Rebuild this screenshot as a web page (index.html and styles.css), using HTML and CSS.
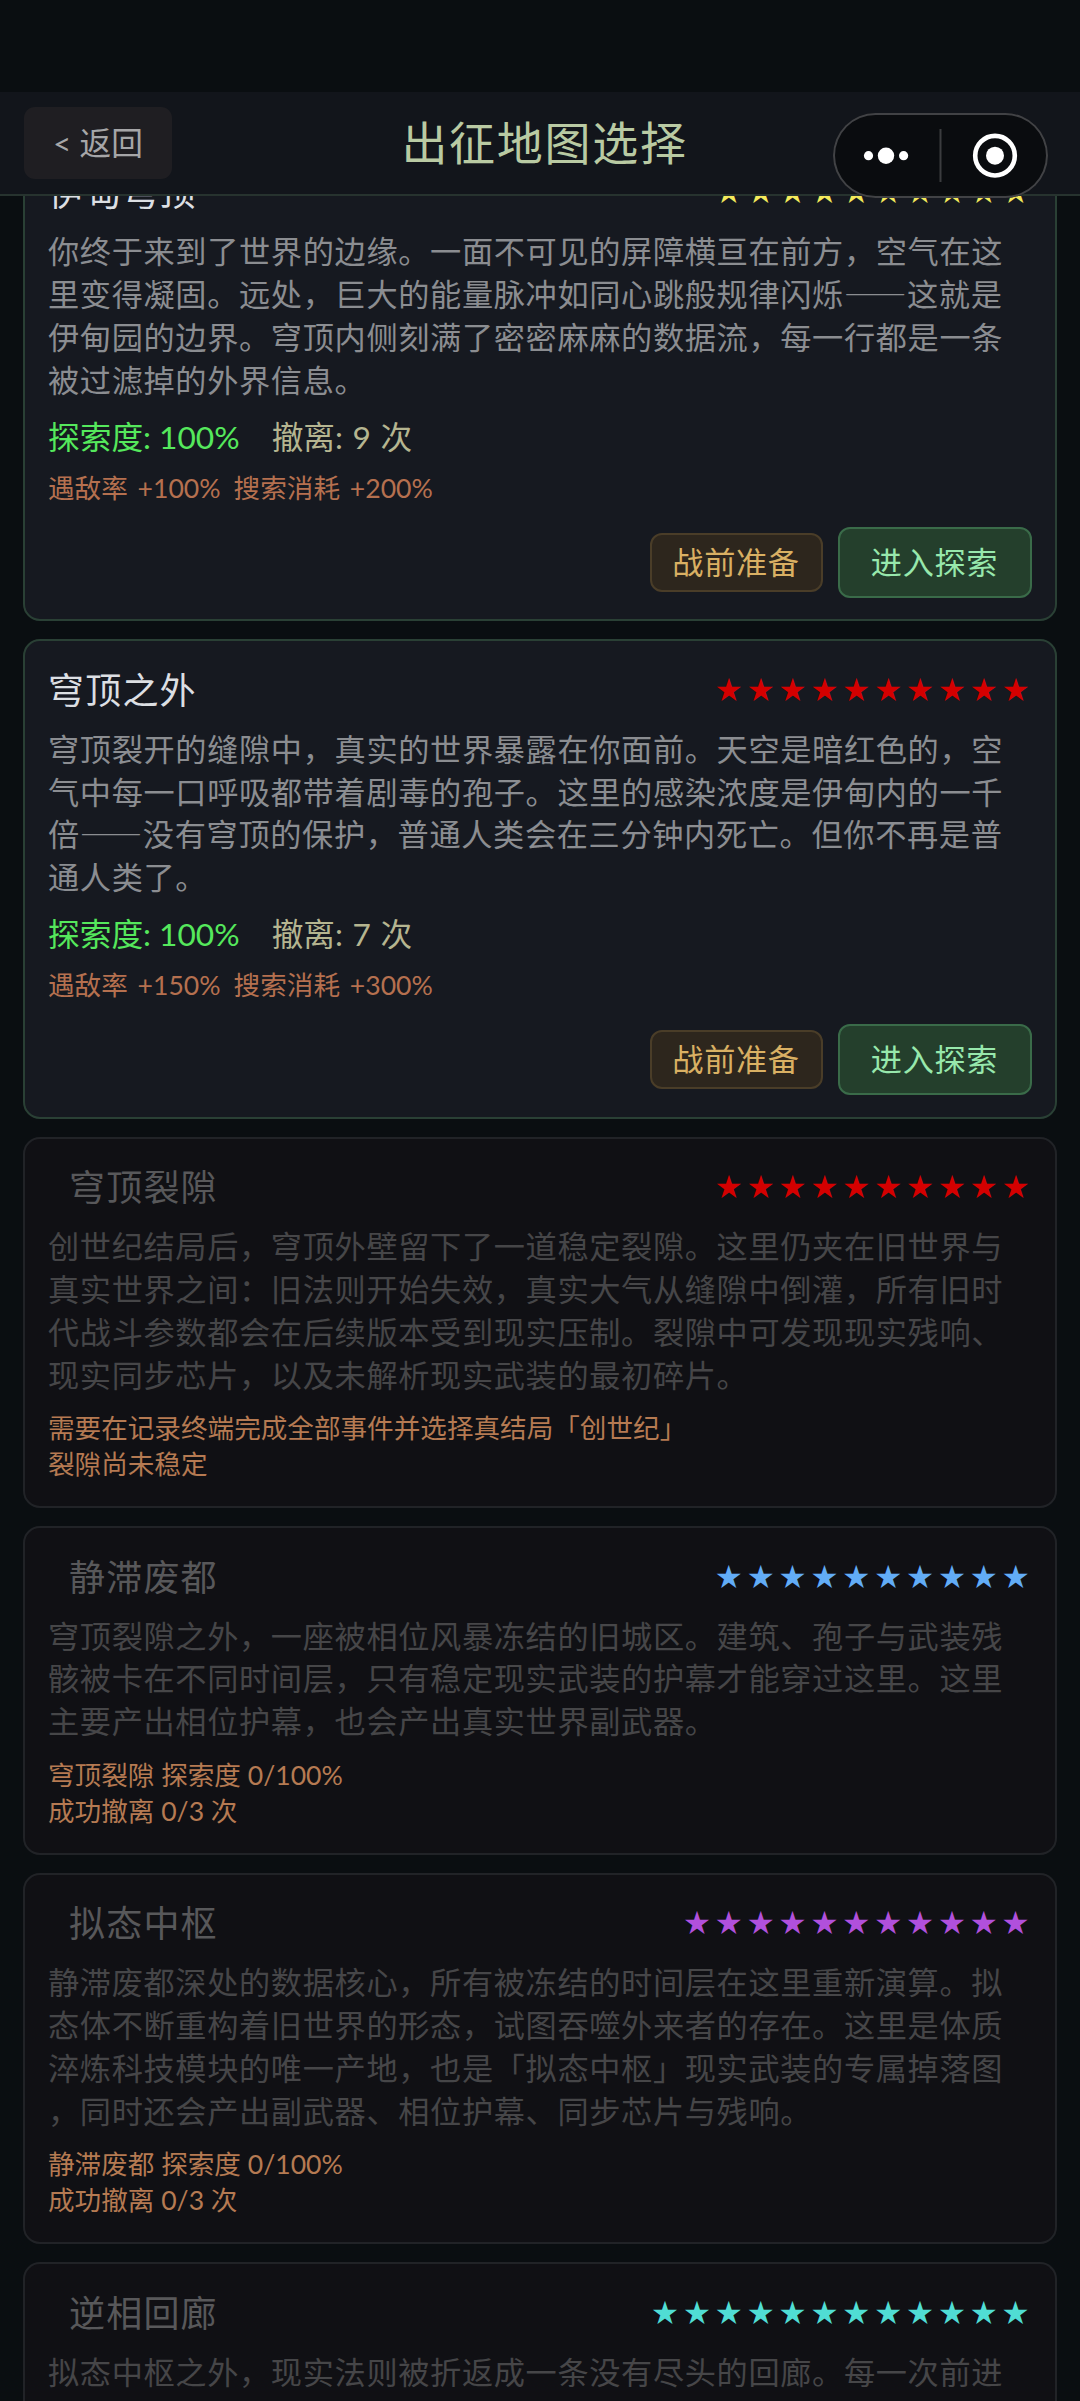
FILE: index.html
```html
<!DOCTYPE html>
<html lang="zh-CN">
<head>
<meta charset="utf-8">
<title>出征地图选择</title>
<link rel="stylesheet" href="styles.css">
</head>
<body>
<div class="page">
  <header class="header">
    <button class="back">&lt; 返回</button>
    <h1 class="heading">出征地图选择</h1>
  </header>

  <main class="list">
    <div class="track">
      <article class="card">
        <div class="top"><h2 class="name">伊甸穹顶</h2><span class="stars yellow">★★★★★★★★★★</span></div>
        <p class="desc">你终于来到了世界的边缘。一面不可见的屏障横亘在前方，空气在这里变得凝固。远处，巨大的能量脉冲如同心跳般规律闪烁——这就是伊甸园的边界。穹顶内侧刻满了密密麻麻的数据流，每一行都是一条被过滤掉的外界信息。</p>
        <div class="stats"><span class="explore">探索度: 100%</span><span class="retreat">撤离: 9 次</span></div>
        <div class="effects"><span>遇敌率 +100%</span><span>搜索消耗 +200%</span></div>
        <div class="actions"><button class="btn prepare">战前准备</button><button class="btn enter">进入探索</button></div>
      </article>

      <article class="card">
        <div class="top"><h2 class="name">穹顶之外</h2><span class="stars red">★★★★★★★★★★</span></div>
        <p class="desc">穹顶裂开的缝隙中，真实的世界暴露在你面前。天空是暗红色的，空气中每一口呼吸都带着剧毒的孢子。这里的感染浓度是伊甸内的一千倍——没有穹顶的保护，普通人类会在三分钟内死亡。但你不再是普通人类了。</p>
        <div class="stats"><span class="explore">探索度: 100%</span><span class="retreat">撤离: 7 次</span></div>
        <div class="effects"><span>遇敌率 +150%</span><span>搜索消耗 +300%</span></div>
        <div class="actions"><button class="btn prepare">战前准备</button><button class="btn enter">进入探索</button></div>
      </article>

      <article class="card locked">
        <div class="top"><h2 class="name">穹顶裂隙</h2><span class="stars red">★★★★★★★★★★</span></div>
        <p class="desc">创世纪结局后，穹顶外壁留下了一道稳定裂隙。这里仍夹在旧世界与真实世界之间：旧法则开始失效，真实大气从缝隙中倒灌，所有旧时代战斗参数都会在后续版本受到现实压制。裂隙中可发现现实残响、现实同步芯片，以及未解析现实武装的最初碎片。</p>
        <div class="needs"><div>需要在记录终端完成全部事件并选择真结局「创世纪」</div><div>裂隙尚未稳定</div></div>
      </article>

      <article class="card locked">
        <div class="top"><h2 class="name">静滞废都</h2><span class="stars blue">★★★★★★★★★★</span></div>
        <p class="desc">穹顶裂隙之外，一座被相位风暴冻结的旧城区。建筑、孢子与武装残骸被卡在不同时间层，只有稳定现实武装的护幕才能穿过这里。这里主要产出相位护幕，也会产出真实世界副武器。</p>
        <div class="needs"><div>穹顶裂隙 探索度 0/100%</div><div>成功撤离 0/3 次</div></div>
      </article>

      <article class="card locked">
        <div class="top"><h2 class="name">拟态中枢</h2><span class="stars purple">★★★★★★★★★★★</span></div>
        <p class="desc">静滞废都深处的数据核心，所有被冻结的时间层在这里重新演算。拟态体不断重构着旧世界的形态，试图吞噬外来者的存在。这里是体质淬炼科技模块的唯一产地，也是「拟态中枢」现实武装的专属掉落图，同时还会产出副武器、相位护幕、同步芯片与残响。</p>
        <div class="needs"><div>静滞废都 探索度 0/100%</div><div>成功撤离 0/3 次</div></div>
      </article>

      <article class="card locked">
        <div class="top"><h2 class="name">逆相回廊</h2><span class="stars teal">★★★★★★★★★★★★</span></div>
        <p class="desc">拟态中枢之外，现实法则被折返成一条没有尽头的回廊。每一次前进</p>
      </article>
    </div>
  </main>

  <div class="capsule">
    <svg width="215" height="85" viewBox="0 0 215 85" fill="#fff">
      <circle cx="35.5" cy="42.7" r="4.6"/>
      <circle cx="53" cy="42.7" r="8.2"/>
      <circle cx="70.6" cy="42.7" r="4.6"/>
      <path d="M107.5 16v53" stroke="#3b3c3f" stroke-width="2"/>
      <circle cx="162" cy="42.7" r="19.8" fill="none" stroke="#fff" stroke-width="4.6"/>
      <circle cx="162" cy="42.7" r="9"/>
    </svg>
  </div>
</div>
</body>
</html>
```
FILE: styles.css
```css
* { box-sizing: border-box; }

body {
  margin: 0;
  background: #0a0e11;
  font-family: Lato, "Noto Sans CJK SC", sans-serif;
}

h1, h2, p { margin: 0; font-weight: 400; }

button {
  margin: 0;
  padding: 0;
  font: inherit;
}

.page {
  position: relative;
  display: flex;
  flex-direction: column;
  width: 1080px;
  height: 2401px;
  padding-top: 92px;
  overflow: hidden;
}

.header {
  display: grid;
  grid-template-columns: 1fr auto 1fr;
  align-items: center;
  flex: none;
  height: 104px;
  padding: 0 24px;
  background: #12151b;
  border-bottom: 2px solid #27332f;
}

.back {
  justify-self: start;
  width: 148px;
  height: 72px;
  border: 0;
  border-radius: 11px;
  background: #1f1e22;
  color: #a6a6a8;
  font-size: 31.7px;
  line-height: 72px;
}

.heading {
  padding-left: 9px;
  color: #b9caa3;
  font-size: 46px;
  letter-spacing: 1.7px;
  line-height: 60px;
}

.list {
  flex: 1;
  min-height: 0;
  display: flex;
  flex-direction: column;
  justify-content: flex-end;
  overflow: hidden;
}

/* the list is scrolled: the first card starts above the visible area */
.track {
  display: flex;
  flex-direction: column;
  gap: 18px;
  padding: 0 23px;
  flex: none;
}

.card {
  height: 479.4px;
  flex: none;
  padding: 21.5px 23.5px 0 23px;
  border: 2px solid #2a4035;
  border-radius: 17px;
  background: #161920;
}

.top {
  display: flex;
  align-items: center;
  justify-content: space-between;
  height: 54px;
}

.name {
  color: #dcdfe3;
  font-size: 36px;
  letter-spacing: 1.2px;
  line-height: 54px;
}

.stars {
  margin-right: -3px;
  font-family: "Noto Sans CJK SC", sans-serif;
  font-size: 26px;
  letter-spacing: 5.87px;
  line-height: 50px;
  padding-bottom: 4px;
}

.yellow { color: #f4ea5c; }
.red { color: #d40000; }
.blue { color: #62acf6; }
.purple { color: #b150dc; }
.teal { color: #50ddd4; }

.desc {
  margin-top: 10px;
  color: #8b8d91;
  font-family: "Noto Sans CJK SC", sans-serif;
  font-size: 31.2px;
  letter-spacing: 0.65px;
  line-height: 42.8px;
  line-break: anywhere;
}

.stats {
  display: flex;
  gap: 32px;
  margin-top: 15px;
  font-size: 31.7px;
  line-height: 43px;
}

.explore { color: #55e85c; }
.retreat { color: #b5b590; word-spacing: 1.5px; }

.effects {
  display: flex;
  gap: 13px;
  margin-top: 11.5px;
  color: #b5704f;
  font-size: 26.6px;
  line-height: 36px;
  word-spacing: 3px;
}

.actions {
  display: flex;
  align-items: center;
  justify-content: flex-end;
  gap: 15px;
  margin-top: 20.5px;
}

.btn {
  padding-bottom: 4px;
  border: 2px solid;
  border-radius: 12px;
  font-size: 31.2px;
  letter-spacing: 0.65px;
}

.prepare {
  width: 173px;
  height: 59px;
  border-color: #4a3d28;
  background: #2d261d;
  color: #d9b063;
}

.enter {
  width: 194px;
  height: 71px;
  border-color: #3a6b49;
  background: #243f2c;
  color: #97e8ac;
}

.locked {
  height: auto;
  border-color: #212327;
  background: #101014;
}

.locked .name { margin-left: 21px; color: #58585a; }
.locked .desc { color: #464648; }

.needs {
  margin-top: 14.7px;
  padding-bottom: 24px;
  color: #b57a52;
  font-size: 26.6px;
  line-height: 36px;
}

.card:last-child { height: 139px; border-bottom: 0; border-radius: 17px 17px 0 0; }

/* host app's floating menu */
.capsule {
  position: absolute;
  left: 833px;
  top: 113px;
  width: 215px;
  height: 85px;
  border-radius: 43px;
  background: rgba(10, 11, 14, 0.9);
  box-shadow: inset 0 0 0 2px #414245;
}

.capsule svg { display: block; }
```
